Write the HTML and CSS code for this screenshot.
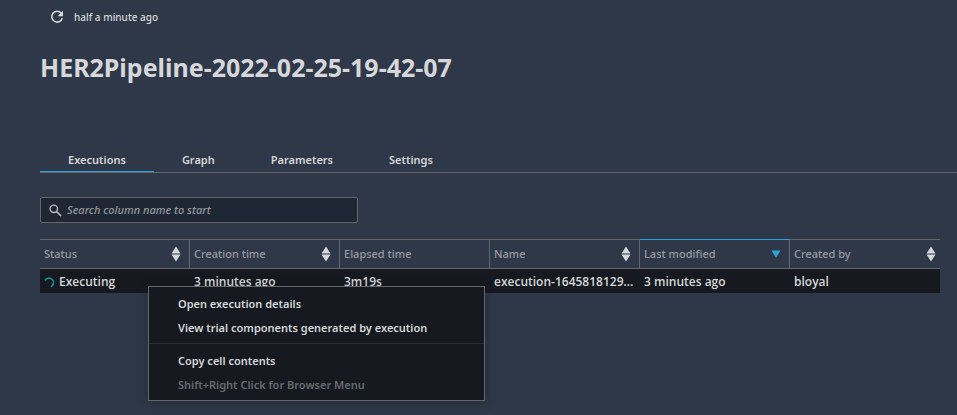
FILE: index.html
```html
<!DOCTYPE html>
<html lang="en">
<head>
<meta charset="utf-8">
<title>HER2Pipeline-2022-02-25-19-42-07</title>
<link rel="stylesheet" href="styles.css">
</head>
<body>
<main class="page">
  <div class="refresh">
    <button class="refresh-button" type="button" aria-label="Refresh">
      <svg width="14" height="14" viewBox="0 0 14 14" aria-hidden="true"><path d="M11.3 3.2A5.4 5.4 0 1 0 12.3 8.300" fill="none" stroke="currentColor" stroke-width="1.6"/><path d="M13 .8v5.400H7.600z" fill="currentColor"/></svg>
    </button>
    <span>half a minute ago</span>
  </div>
  <h1 class="title">HER2Pipeline-2022-02-25-19-42-07</h1>
  <nav class="tabs">
    <a class="tab tab-active" href="#executions">Executions</a>
    <a class="tab" href="#graph">Graph</a>
    <a class="tab" href="#parameters">Parameters</a>
    <a class="tab" href="#settings">Settings</a>
  </nav>
  <label class="search">
    <svg width="13" height="13" viewBox="0 0 13 13" aria-hidden="true"><circle cx="4.800" cy="4.800" r="3.700" fill="none" stroke="currentColor" stroke-width="1.400"/><path d="M7.500 7.500L12 12" stroke="currentColor" stroke-width="1.700"/></svg>
    <input class="search-input" type="text" placeholder="Search column name to start" aria-label="Search column name to start">
  </label>
  <div class="grid">
    <table class="table">
      <thead>
        <tr>
          <th><div class="head">Status<svg class="sort" width="10" height="16" viewBox="0 0 10 16" aria-hidden="true"><path d="M5 .5L9.500 7.500H.5zM.5 8.500h9L5 15.500z"/></svg></div></th>
          <th><div class="head">Creation time<svg class="sort" width="10" height="16" viewBox="0 0 10 16" aria-hidden="true"><path d="M5 .5L9.500 7.500H.5zM.5 8.500h9L5 15.500z"/></svg></div></th>
          <th><div class="head">Elapsed time</div></th>
          <th><div class="head">Name<svg class="sort" width="10" height="16" viewBox="0 0 10 16" aria-hidden="true"><path d="M5 .5L9.500 7.500H.5zM.5 8.500h9L5 15.500z"/></svg></div></th>
          <th class="sorted"><div class="head">Last modified<svg class="sort" width="10" height="8" viewBox="0 0 10 8" aria-hidden="true"><path d="M.5 .5h9L5 7.800z"/></svg></div></th>
          <th><div class="head">Created by<svg class="sort" width="10" height="16" viewBox="0 0 10 16" aria-hidden="true"><path d="M5 .5L9.500 7.500H.5zM.5 8.500h9L5 15.500z"/></svg></div></th>
        </tr>
      </thead>
      <tbody>
        <tr>
          <td><div class="status"><svg width="11" height="11" viewBox="0 0 11 11" aria-hidden="true"><path d="M.9 3.500A4.600 4.600 0 1 1 7 9.800" fill="none" stroke="currentColor" stroke-width="1.600"/></svg><span>Executing</span></div></td>
          <td>3 minutes ago</td>
          <td>3m19s</td>
          <td>execution-1645818129...</td>
          <td>3 minutes ago</td>
          <td>bloyal</td>
        </tr>
      </tbody>
    </table>
    <div class="menu" role="menu">
      <button class="item" type="button" role="menuitem">Open execution details</button>
      <button class="item" type="button" role="menuitem">View trial components generated by execution</button>
      <hr class="separator">
      <button class="item" type="button" role="menuitem">Copy cell contents</button>
      <button class="item" type="button" role="menuitem" disabled>Shift+Right Click for Browser Menu</button>
    </div>
  </div>
</main>
</body>
</html>
```
FILE: styles.css
```css
* { box-sizing: border-box; }

body {
  min-height: 100vh;
  margin: 0;
  background: #2f3848;
  color: #d5d7da;
  font: 600 11px/18px "Noto Sans", "Open Sans", sans-serif;
}

button, input { font: inherit; color: inherit; }

.page { min-height: 100vh; padding: 8px 0 0 40px; }

.refresh {
  display: flex;
  align-items: center;
  gap: 10px;
  padding-left: 10px;
  font-size: 10px;
  font-weight: 500;
}

.refresh-button {
  display: flex;
  padding: 0;
  border: 0;
  background: none;
}

.title {
  margin: 23px 0 66px;
  font-size: 25px;
  line-height: 36px;
  font-weight: 700;
}

.tabs {
  display: flex;
  border-bottom: 1px solid #65676a;
}

.tab {
  padding: 0 28px 2px;
  border-bottom: 1px solid transparent;
  color: inherit;
  text-decoration: none;
}

.tab-active { border-bottom-color: #2ea2d6; }

.search {
  display: flex;
  align-items: center;
  gap: 5px;
  width: 318px;
  height: 26px;
  margin: 24px 0 16px;
  padding: 0 8px;
  border: 1px solid #65676a;
  border-radius: 2px;
  background: #202734;
  color: #b6babf;
}

.search-input {
  flex: 1;
  min-width: 0;
  padding: 0;
  border: 0;
  outline: 0;
  background: none;
  font-weight: 500;
}

.search-input::placeholder { color: #92979e; font-style: italic; opacity: 1; }

.grid { position: relative; margin-right: 17px; }

.table {
  width: 100%;
  table-layout: fixed;
  border-collapse: separate;
  border-spacing: 0;
  text-align: left;
}

th {
  height: 30px;
  padding: 0 8px 0 4px;
  border: solid #65676a;
  border-width: 1px 1px 1px 0;
  color: #969ba3;
  font-weight: 500;
}

th:last-child { border-right: 0; padding-right: 4px; }
.sorted { border-top-color: #2ea2d6; }

.head { display: flex; align-items: center; justify-content: space-between; }

.sort { fill: #d5d7da; }
.sorted .sort { fill: #2ea2d6; }

td {
  height: 24px;
  padding: 2px 0 0 4px;
  background: #16191f;
  font-family: "Open Sans", "Noto Sans", sans-serif;
  font-size: 12px;
  white-space: nowrap;
}

.status { display: flex; align-items: center; gap: 4px; }
.status svg { color: #0d9199; }

.menu {
  position: absolute;
  top: 47px;
  left: 108px;
  width: 337px;
  padding: 4px 0;
  border: 1px solid #65676a;
  background: #16191f;
  box-shadow: 0 2px 10px rgba(0, 0, 0, 0.25);
}

.item {
  display: block;
  width: 100%;
  height: 24px;
  padding: 2px 29px 0;
  border: 0;
  background: none;
  text-align: left;
}

.item:disabled { color: #696c70; }

.separator { margin: 4px 0; border: 0; border-top: 1px solid #282d38; }
```
